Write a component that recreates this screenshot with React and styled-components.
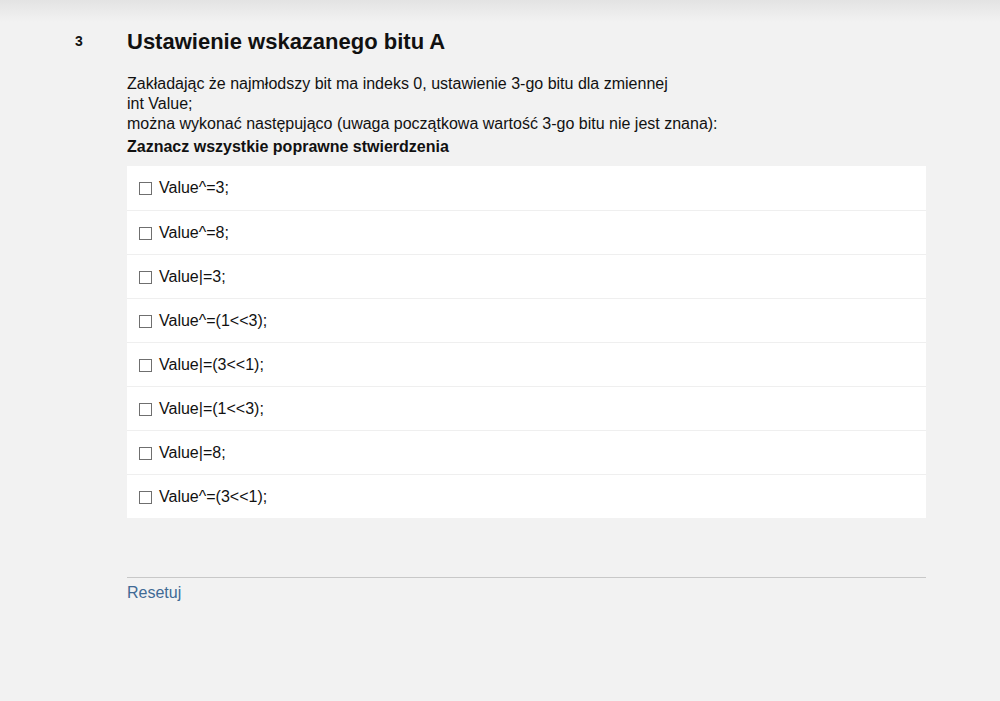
import styled, { createGlobalStyle } from "styled-components";

const GlobalStyle = createGlobalStyle`
  html, body {
    margin: 0;
    padding: 0;
    background: #f2f2f2;
  }
  body {
    font-family: Arial, "Liberation Sans", sans-serif;
    color: #111;
  }
`;

const options = [
  "Value^=3;",
  "Value^=8;",
  "Value|=3;",
  "Value^=(1<<3);",
  "Value|=(3<<1);",
  "Value|=(1<<3);",
  "Value|=8;",
  "Value^=(3<<1);",
];

const App = () => {
  return (
    <Page>
      <GlobalStyle />
      <div className="question">
        <div className="number">3</div>
        <div className="body">
          <h1 className="title">Ustawienie wskazanego bitu A</h1>
          <div className="text">
            Zakładając że najmłodszy bit ma indeks 0, ustawienie 3-go bitu dla zmiennej
            <br />
            int Value;
            <br />
            można wykonać następująco (uwaga początkowa wartość 3-go bitu nie jest znana):
          </div>
          <div className="hint">Zaznacz wszystkie poprawne stwierdzenia</div>
          <OptionList>
            {options.map((o) => (
              <OptionRow key={o}>
                <Box />
                <span>{o}</span>
              </OptionRow>
            ))}
          </OptionList>
          <Footer>
            <a className="reset">Resetuj</a>
          </Footer>
        </div>
      </div>
    </Page>
  );
};

export default App;

const Page = styled.div`
  min-height: 701px;
  background: linear-gradient(to bottom, #e3e3e3 0px, #f2f2f2 22px);

  .question {
    display: flex;
    padding-top: 29px;
  }

  .number {
    width: 52px;
    padding-left: 75px;
    box-sizing: content-box;
    font-size: 14px;
    font-weight: bold;
    padding-top: 4px;
  }

  .body {
    width: 799px;
  }

  .title {
    margin: 0;
    font-size: 22px;
    font-weight: bold;
    line-height: 26px;
  }

  .text {
    margin-top: 19px;
    font-size: 16px;
    line-height: 20px;
  }

  .hint {
    margin-top: 2px;
    font-size: 16px;
    font-weight: bold;
    line-height: 22px;
  }
`;

const OptionList = styled.div`
  margin-top: 8px;
  background: #fff;
  display: flex;
  flex-direction: column;
`;

const OptionRow = styled.div`
  display: flex;
  align-items: center;
  height: 44px;
  padding-left: 12px;
  font-size: 16px;
  border-top: 1px solid #efefef;
  box-sizing: border-box;

  &:first-child {
    border-top: none;
  }
`;

const Box = styled.span`
  width: 11px;
  height: 11px;
  border: 1px solid #6f6f6f;
  margin-right: 7px;
  margin-top: 1px;
`;

const Footer = styled.div`
  margin-top: 59px;
  border-top: 1px solid #c8c8c8;
  padding-top: 6px;

  .reset {
    font-size: 16px;
    color: #3f6a95;
    cursor: pointer;
  }
`;
